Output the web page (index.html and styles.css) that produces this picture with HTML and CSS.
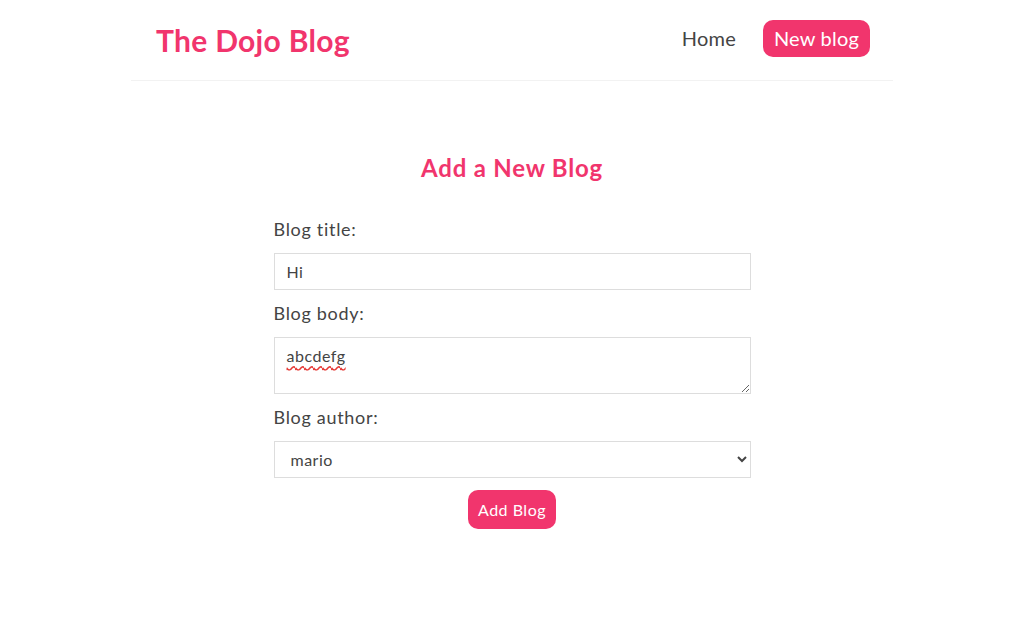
FILE: index.html
```html
<!DOCTYPE html>
<html lang="en">
<head>
    <meta charset="UTF-8">
    <meta name="viewport" content="width=device-width, initial-scale=1.0">
    <title>The Dojo Blog</title>
    <link rel="stylesheet" href="styles.css">
</head>
<body>
    <nav class="navbar">
        <h1>The Dojo Blog</h1>
        <div class="links">
            <a href="#" class="home-link">Home</a>
            <a href="#" class="new-link">New blog</a>
        </div>
    </nav>
    <div class="content">
        <div class="create">
            <h2>Add a New Blog</h2>
            <form>
                <label for="title">Blog title:</label>
                <input type="text" id="title" value="Hi">
                <label for="body">Blog body:</label>
                <textarea id="body" class="misspelt">abcdefg</textarea>
                <label for="author">Blog author:</label>
                <select id="author">
                    <option value="mario">mario</option>
                    <option value="yoshi">yoshi</option>
                </select>
                <button type="button">Add Blog</button>
            </form>
        </div>
    </div>
</body>
</html>
```

FILE: styles.css
```css
/* base */
* {
    margin: 0;
    font-family: 'Lato', sans-serif;
    color: #444;
    letter-spacing: 0.5px;
}

body {
    background: #fff;
}

/* navbar */
.navbar {
    display: flex;
    align-items: center;
    max-width: 762px;
    height: 81px;
    margin: 0 auto;
    padding: 0 23px 0 25px;
    box-sizing: border-box;
    border-bottom: 1px solid #f2f2f2;
}

.navbar h1 {
    color: #f1356d;
    font-size: 30px;
    font-weight: 700;
    letter-spacing: 0.3px;
}

.navbar .links {
    margin-left: auto;
    display: flex;
    align-items: center;
    padding-bottom: 4px;
}

.navbar a {
    text-decoration: none;
    font-size: 20px;
    line-height: 23px;
    letter-spacing: 0.2px;
    padding: 7px 7px;
}

.navbar a:hover {
    color: #f1356d;
}

.navbar .new-link {
    margin-left: 20px;
    padding: 7px 11px;
    color: #fff;
    background: #f1356d;
    border-radius: 10px;
}

/* create form */
.content {
    max-width: 477px;
    margin: 0 auto;
    padding-top: 72px;
}

.create {
    text-align: center;
}

.create h2 {
    font-size: 24px;
    line-height: 29px;
    font-weight: 700;
    color: #f1356d;
    letter-spacing: 0.8px;
    margin-bottom: 36px;
}

.create label {
    display: block;
    text-align: left;
    font-size: 18px;
    line-height: 23px;
    letter-spacing: 0.7px;
}

.create input,
.create textarea,
.create select {
    display: block;
    width: 100%;
    box-sizing: border-box;
    margin: 12px 0;
    padding: 7px 12px;
    border: 1px solid #ddd;
    font-size: 16px;
    line-height: 21px;
    background: #fff;
}

.create input {
    height: 37px;
}

.create textarea {
    height: 57px;
}

.create .misspelt {
    text-decoration: underline wavy #e53935;
    text-underline-offset: 3px;
}

.create select {
    height: 37px;
    padding: 0 12px;
}

.create button {
    background: #f1356d;
    color: #fff;
    border: 0;
    padding: 10px;
    border-radius: 10px;
    font-size: 16px;
    line-height: 19px;
    cursor: pointer;
}
```
